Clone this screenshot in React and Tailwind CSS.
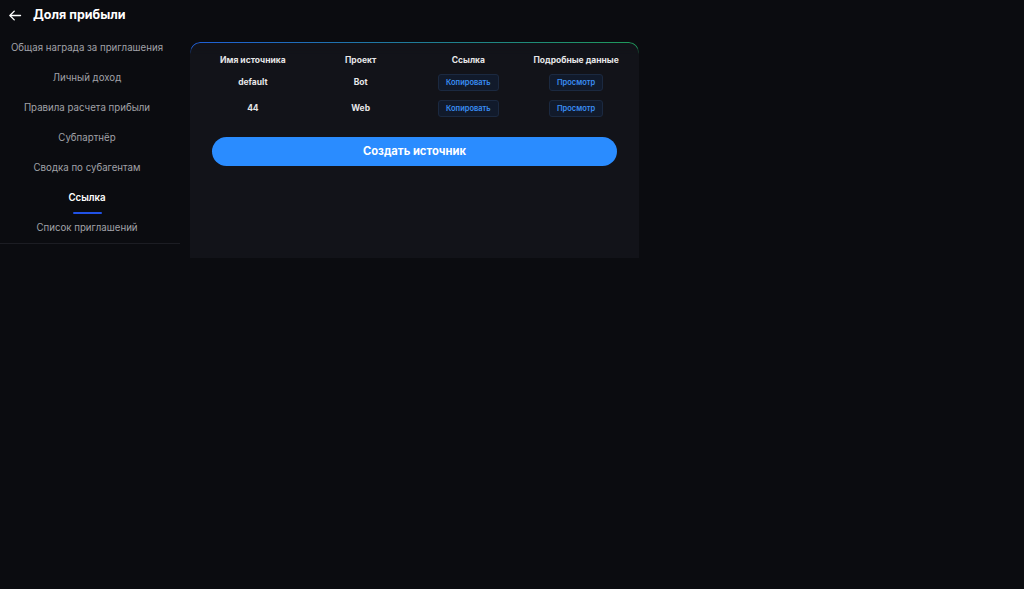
import React from "react";

const menu = [
  "Общая награда за приглашения",
  "Личный доход",
  "Правила расчета прибыли",
  "Субпартнёр",
  "Сводка по субагентам",
  "Ссылка",
  "Список приглашений",
];

const rows = [
  { name: "default", project: "Bot" },
  { name: "44", project: "Web" },
];

function SmallButton({ children }) {
  return (
    <button className="h-[17px] px-[7px] rounded-[3px] bg-[#111a2b] border border-[#1b2940] text-[7.5px] font-semibold text-[#3a8ef5] leading-none">
      {children}
    </button>
  );
}

export default function App() {
  const active = "Ссылка";

  return (
    <div className="min-h-[589px] w-full bg-[#0b0c10] text-white font-['Inter','Liberation_Sans',sans-serif]">
      <div className="flex items-center gap-[10px] h-[30px] pl-[8px]">
        <svg width="15" height="15" viewBox="0 0 24 24" fill="none" stroke="white" strokeWidth="2.2" strokeLinecap="round" strokeLinejoin="round">
          <path d="M20 12H4" />
          <path d="M10 5l-7 7 7 7" />
        </svg>
        <h1 className="text-[12.5px] font-bold">Доля прибыли</h1>
      </div>

      <div className="flex gap-[10px] pt-[2px]">
        <div className="w-[180px] flex flex-col pt-[1px]">
          <div className="w-[174px] flex flex-col">
            {menu.map((item) => (
              <div key={item} className="h-[30px] flex flex-col items-center justify-center relative">
                <span className={`text-[9.7px] ${item === active ? "text-white font-semibold" : "text-[#a1a2a8]"}`}>
                  {item}
                </span>
                {item === active && (
                  <span className="absolute bottom-[-1px] w-[29px] h-[2px] bg-[#2152e6] rounded-full" />
                )}
              </div>
            ))}
          </div>
          <div className="h-px bg-[#1c1d23]" />
        </div>

        <div className="w-[449px] h-[216px] mt-[10px] bg-[#121319] rounded-t-[10px] relative pt-[8px]">
          <div className="absolute inset-x-0 top-0 h-[12px] rounded-t-[10px] border-t border-x border-transparent [background:linear-gradient(#121319,#121319)_padding-box,linear-gradient(90deg,#1f5fd8,#1f9a5a)_border-box] [mask-image:linear-gradient(to_bottom,black_40%,transparent)]" />
          <div className="relative px-[9px]">
            <div className="grid grid-cols-4 h-[20px] items-center text-[8.5px] font-bold text-[#e6e6e8] text-center">
              <span>Имя источника</span>
              <span>Проект</span>
              <span>Ссылка</span>
              <span>Подробные данные</span>
            </div>
            {rows.map((r) => (
              <div key={r.name} className="grid grid-cols-4 h-[25.5px] items-center text-[8.5px] font-bold text-[#e6e6e8] text-center">
                <span>{r.name}</span>
                <span>{r.project}</span>
                <span className="flex justify-center"><SmallButton>Копировать</SmallButton></span>
                <span className="flex justify-center"><SmallButton>Просмотр</SmallButton></span>
              </div>
            ))}
          </div>
          <div className="relative px-[22px] mt-[16px]">
            <button className="w-full h-[29px] rounded-full bg-[#2a8cff] text-[11.2px] font-bold text-white">
              Создать источник
            </button>
          </div>
        </div>
      </div>
    </div>
  );
}
